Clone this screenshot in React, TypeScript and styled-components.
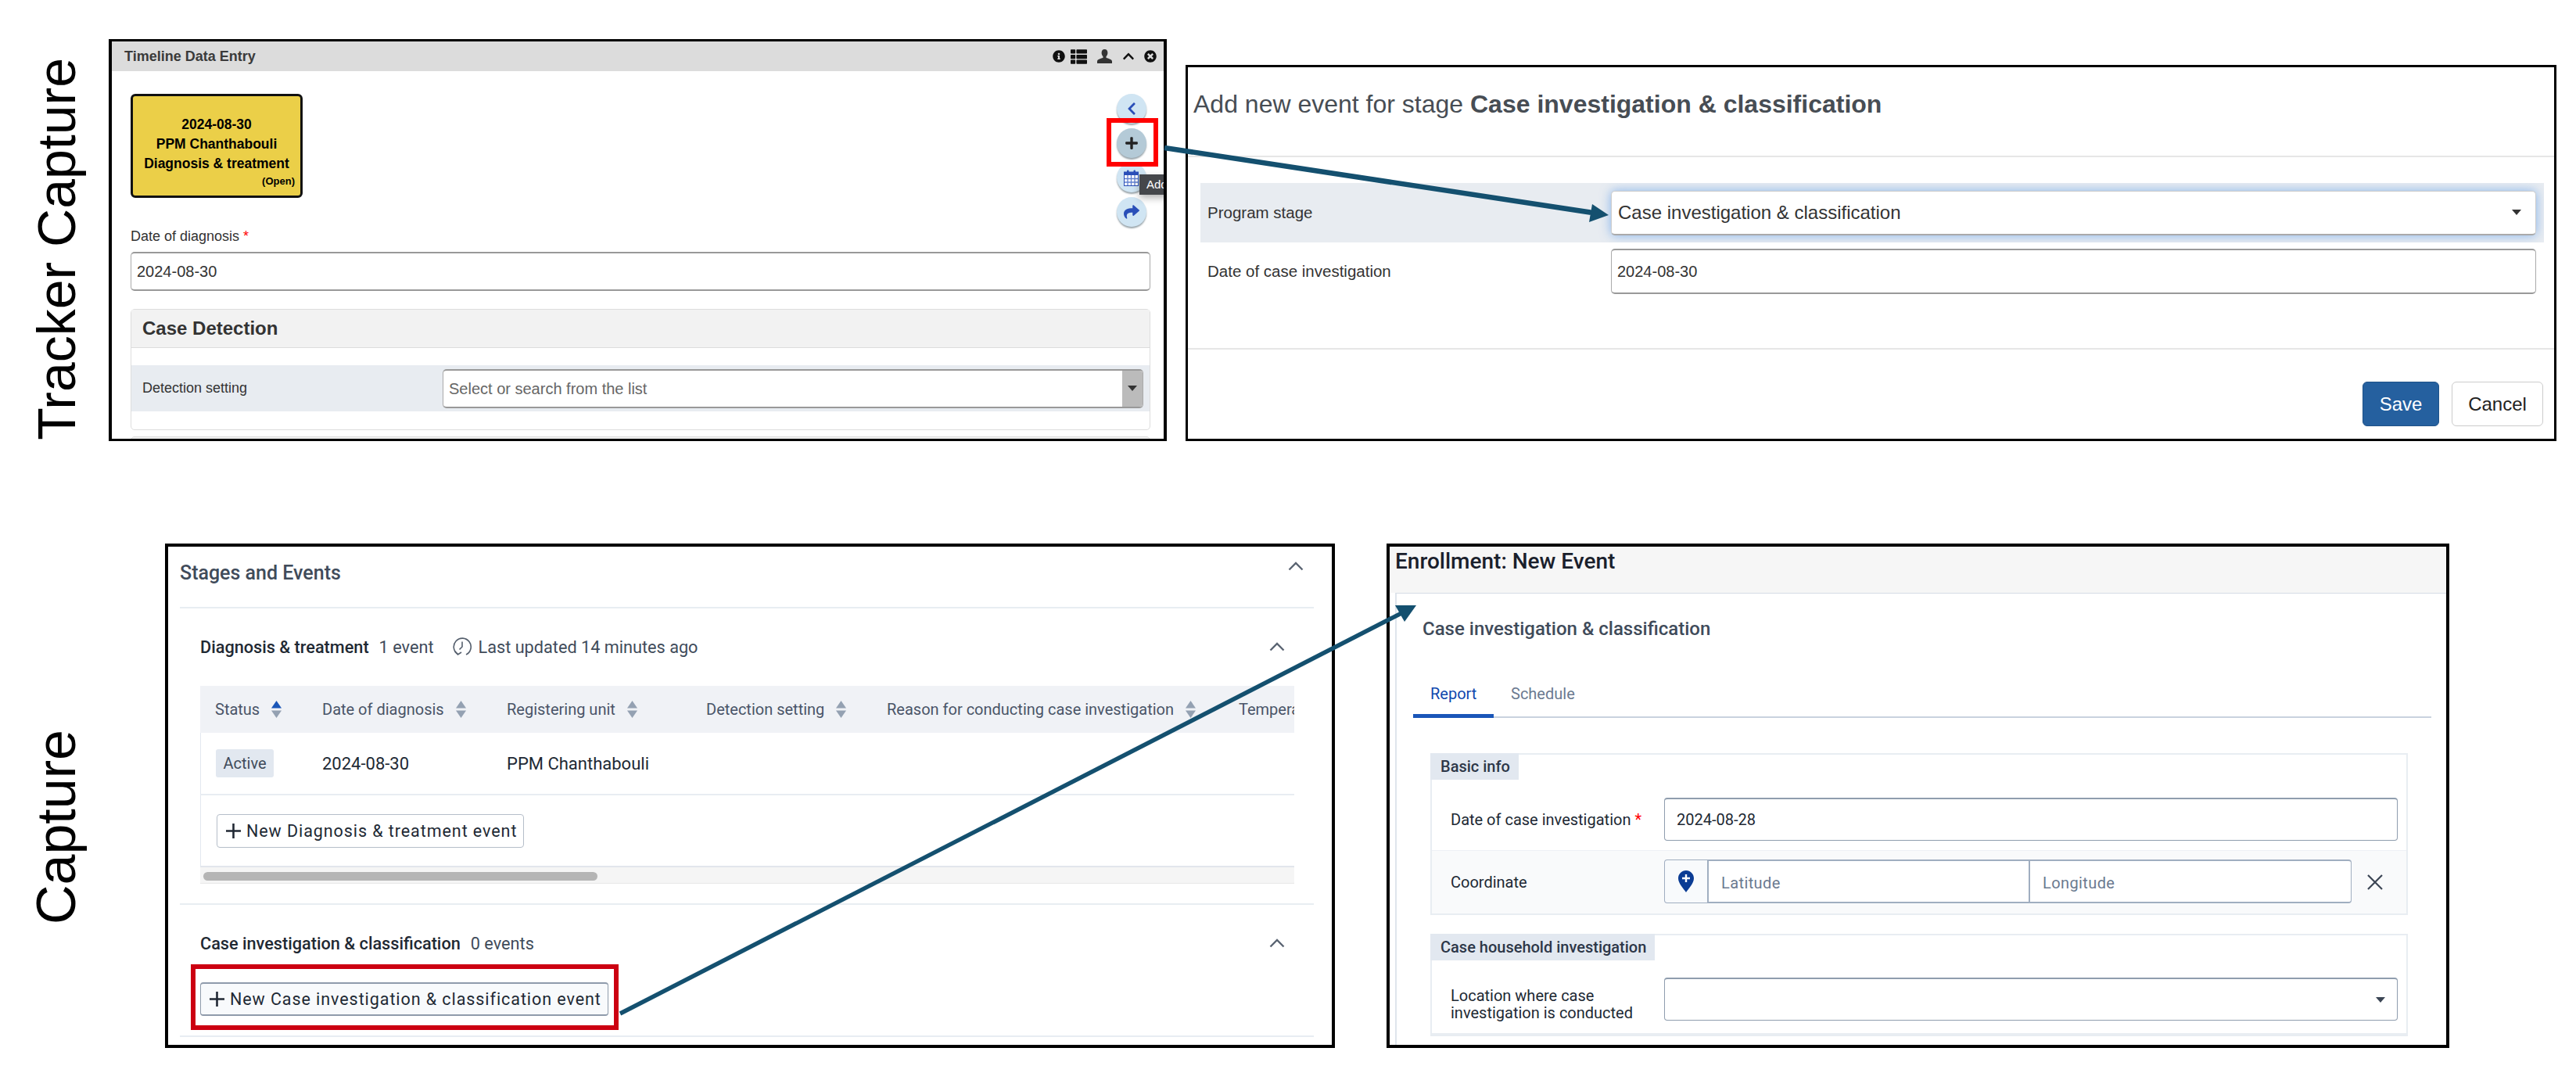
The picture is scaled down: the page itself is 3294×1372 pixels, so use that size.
import React from 'react';
import styled, { createGlobalStyle } from 'styled-components';
import { FaChevronLeft, FaChevronUp, FaInfoCircle, FaPlus, FaShare, FaThList, FaTimesCircle } from 'react-icons/fa';

const GlobalStyle = createGlobalStyle`
  * { box-sizing: border-box; }
  html, body { margin: 0; background: #fff; }
  body { font-family: "Liberation Sans", Arial, sans-serif; color: #333; }
`;

const Page = styled.main`
  position: relative;
  width: 3294px;
  height: 1372px;
  padding-top: 50px;
  overflow: hidden;
  background: #fff;
`;

const Row = styled.div<{ $top?: number }>`
  display: flex;
  align-items: flex-start;
  margin-top: ${(p) => p.$top || 0}px;
`;

const SideSlot = styled.div<{ $width: number; $top: number }>`
  flex: none;
  width: ${(p) => p.$width}px;
  padding: ${(p) => p.$top}px 0 0 34px;
`;

const SideLabel = styled.div<{ $size: number }>`
  writing-mode: vertical-rl;
  transform: rotate(180deg);
  font-size: ${(p) => p.$size}px;
  line-height: 76px;
  color: #000;
  white-space: nowrap;
`;

const Frame = styled.section<{ $width: number; $height: number; $border: string; $left?: number; $top?: number }>`
  flex: none;
  width: ${(p) => p.$width}px;
  height: ${(p) => p.$height}px;
  margin-left: ${(p) => p.$left || 0}px;
  margin-top: ${(p) => p.$top || 0}px;
  border: solid #000;
  border-width: ${(p) => p.$border};
  overflow: hidden;
  background: #fff;
`;

/* Tracker Capture: widget */
const WidgetBar = styled.header`
  display: flex;
  align-items: center;
  height: 38px;
  padding: 0 9px 0 16px;
  background: #dcdcdc;
`;

const WidgetTitle = styled.h2`
  flex: 1;
  margin: 0;
  font-size: 18px;
  font-weight: 700;
  color: #3a3a3a;
`;

const WidgetIcons = styled.div`
  display: flex;
  align-items: center;
  gap: 7px;
  color: #111;
  svg { display: block; }
`;

const WidgetBody = styled.div`
  padding: 29px 17px 0 24px;
`;

const TopRow = styled.div`
  display: flex;
  justify-content: space-between;
  height: 170px;
`;

const EventCard = styled.div`
  display: flex;
  flex-direction: column;
  justify-content: flex-end;
  width: 220px;
  height: 133px;
  padding: 0 7px 9px;
  background: #ebcf48;
  border: 3px solid #111;
  border-radius: 6px;
  color: #000;
  font-weight: 700;
  font-size: 17.5px;
  line-height: 25px;
  text-align: center;
  white-space: nowrap;
`;

const CardNote = styled.div`
  font-size: 13px;
  line-height: 19px;
  text-align: right;
`;

const RoundColumn = styled.div`
  display: flex;
  flex-direction: column;
  gap: 6px;
  margin-right: 5px;
`;

const RoundWrap = styled.div`
  position: relative;
  width: 38px;
  height: 38px;
`;

const RoundButton = styled.div<{ $active?: boolean }>`
  display: flex;
  align-items: center;
  justify-content: center;
  width: 38px;
  height: 38px;
  border-radius: 50%;
  background: ${(p) => (p.$active ? '#b4cad7' : '#d0e5f3')};
  box-shadow: 0 2px 2px #9aa5ab;
  color: ${(p) => (p.$active ? '#222' : '#2a4fb8')};
`;

const Highlight = styled.div<{ $inset: string; $color: string; $width: string }>`
  position: absolute;
  inset: ${(p) => p.$inset};
  border: solid ${(p) => p.$color};
  border-width: ${(p) => p.$width};
  z-index: 3;
`;

const Tooltip = styled.div`
  position: absolute;
  top: 15px;
  left: 29px;
  z-index: 2;
  width: 60px;
  height: 26px;
  padding-left: 9px;
  background: #45474b;
  box-shadow: 0 4px 10px rgba(0, 0, 0, 0.3);
  color: #fff;
  font-size: 15px;
  line-height: 26px;
`;

const FieldLabel = styled.label`
  display: block;
  margin-top: 2px;
  font-size: 18px;
  line-height: 20px;
  color: #333;
`;

const Required = styled.span`
  color: #f00;
`;

const LegacyInput = styled.div<{ $height: number; $muted?: boolean }>`
  flex: 1;
  height: ${(p) => p.$height}px;
  padding-left: 7px;
  background: #fff;
  border: 1px solid #aaa;
  border-top: 2px solid #999;
  border-bottom: 2px solid #999;
  border-radius: 5px;
  font-size: 20px;
  line-height: ${(p) => p.$height - 4}px;
  color: ${(p) => (p.$muted ? '#666' : '#333')};
`;

const DateBlock = styled.div`
  display: flex;
  margin-top: 10px;
`;

const LegacyPanel = styled.div`
  height: 155px;
  margin-top: 23px;
  border: 1px solid #ddd;
  border-radius: 5px;
`;

const LegacyPanelHead = styled.div`
  height: 49px;
  padding-left: 14px;
  background: #f2f2f2;
  border-bottom: 1px solid #ddd;
  font-size: 24px;
  font-weight: 700;
  line-height: 48px;
`;

const DetectionRow = styled.div`
  display: flex;
  align-items: center;
  height: 59px;
  margin-top: 22px;
  padding: 0 8px 0 14px;
  background: #e8ecf1;
`;

const DetectionLabel = styled.span`
  width: 384px;
  font-size: 18px;
`;

const SelectInput = styled(LegacyInput)`
  position: relative;
  overflow: hidden;
`;

const SelectAddon = styled.span`
  position: absolute;
  top: 0;
  right: 0;
  bottom: 0;
  display: flex;
  align-items: center;
  justify-content: center;
  width: 26px;
  background: #bbb;
`;

const Caret = styled.i<{ $color?: string }>`
  display: block;
  width: 0;
  height: 0;
  border: 6px solid transparent;
  border-bottom: 0;
  border-top: 7px solid ${(p) => p.$color || '#333'};
`;

const NextPanel = styled.div`
  height: 20px;
  margin-top: 8px;
  background: #f0f0f0;
  border: 1px solid #ddd;
  border-radius: 5px;
`;

/* Tracker Capture: modal */
const ModalHead = styled.h2`
  height: 115px;
  margin: 0;
  padding: 27px 0 0 7px;
  border-bottom: 2px solid #e6e6e6;
  font-size: 32px;
  font-weight: 400;
  line-height: 40px;
  color: #474d54;
  b { font-weight: 700; }
`;

const ModalBody = styled.div`
  height: 246px;
  padding-top: 33px;
  border-bottom: 2px solid #e6e6e6;
`;

const ModalRow = styled.div<{ $focus?: boolean }>`
  display: flex;
  align-items: center;
  height: ${(p) => (p.$focus ? 76 : 58)}px;
  margin: ${(p) => (p.$focus ? '0' : '8px')} 13px 0 16px;
  padding: 0 10px 0 9px;
  background: ${(p) => (p.$focus ? '#e8ecf1' : 'transparent')};
  overflow: hidden;
`;

const ModalLabel = styled.span`
  flex: none;
  width: 516px;
  font-size: 20.5px;
  color: #333;
`;

const FocusSelect = styled.div`
  position: relative;
  display: flex;
  align-items: center;
  flex: 1;
  height: 57px;
  padding: 0 18px 0 8px;
  background: #fff;
  border: 1px solid #ccc;
  border-bottom: 2px solid #aaa;
  border-radius: 5px;
  box-shadow: 0 0 14px rgba(102, 160, 233, 0.75);
  font-size: 24px;
  color: #333;
  span { flex: 1; }
`;

const ModalFoot = styled.div`
  display: flex;
  justify-content: flex-end;
  gap: 16px;
  padding: 41px 14px 0 0;
`;

const ModalButton = styled.div<{ $primary?: boolean }>`
  width: ${(p) => (p.$primary ? 98 : 117)}px;
  height: 57px;
  background: ${(p) => (p.$primary ? '#25609f' : '#fff')};
  border: 1px solid ${(p) => (p.$primary ? '#1f5288' : '#ccc')};
  border-radius: 6px;
  color: ${(p) => (p.$primary ? '#fff' : '#222')};
  font-size: 24px;
  line-height: 55px;
  text-align: center;
`;

/* Capture: stages list */
const RobotoFrame = styled(Frame)`
  font-family: Roboto, "Liberation Sans", sans-serif;
`;

const StagesBody = styled.div`
  padding: 0 23px 0 15px;
`;

const StagesHead = styled.div`
  display: flex;
  align-items: flex-start;
  justify-content: space-between;
  height: 79px;
  padding: 19px 13px 0 0;
  border-bottom: 2px solid #e8edf2;
  font-size: 25px;
  font-weight: 500;
  line-height: 30px;
  color: #404b5a;
`;

const Stage = styled.div`
  padding: 0 25px 25px 26px;
  border-bottom: 2px solid #e8edf2;
`;

const StageHead = styled.div`
  display: flex;
  align-items: center;
  height: 99px;
  padding: 34px 12px 35px 0;
  font-size: 21.7px;
  color: #404b5a;
  b { font-weight: 500; color: #1f2933; margin-right: 13px; }
`;

const StageUpdated = styled.span`
  display: inline-flex;
  align-items: center;
  flex: 1;
  margin-left: 25px;
  gap: 8px;
`;

const Chevron = styled.svg`
  flex: none;
  display: block;
  margin-left: auto;
`;

const TableClip = styled.div`
  overflow: hidden;
`;

const TableLine = styled.div<{ $head?: boolean }>`
  display: flex;
  align-items: center;
  height: ${(p) => (p.$head ? 60 : 80)}px;
  background: ${(p) => (p.$head ? '#f0f2f6' : '#fff')};
  border-left: 1px solid ${(p) => (p.$head ? '#f0f2f6' : '#e2e8f0')};
  border-bottom: ${(p) => (p.$head ? 0 : '2px solid #e8edf2')};
`;

const Cell = styled.div<{ $width: number; $head?: boolean }>`
  flex: none;
  display: flex;
  align-items: center;
  gap: 15px;
  width: ${(p) => p.$width}px;
  font-size: ${(p) => (p.$head ? 20 : 22)}px;
  color: ${(p) => (p.$head ? '#4a5568' : '#212934')};
  white-space: nowrap;
`;

const FirstPad = styled.div<{ $width: number }>`
  flex: none;
  width: ${(p) => p.$width}px;
`;

const StatusChip = styled.span`
  display: inline-block;
  width: 74px;
  height: 36px;
  background: #e2e8f0;
  border-radius: 3px;
  color: #404b5a;
  font-size: 20px;
  line-height: 36px;
  text-align: center;
`;

const ButtonSlot = styled.div`
  height: 90px;
  padding: 24px 0 0 20px;
  border-left: 1px solid #e2e8f0;
`;

const AddButton = styled.div<{ $focus?: boolean }>`
  position: relative;
  display: inline-flex;
  align-items: center;
  gap: 7px;
  height: 43px;
  padding: 0 8px 0 11px;
  background: ${(p) => (p.$focus ? '#f8fafc' : '#fff')};
  border: 1px solid ${(p) => (p.$focus ? '#8f9bab' : '#b5bec9')};
  border-width: ${(p) => (p.$focus ? '2px 1px' : '1px')};
  border-radius: 4px;
  color: #212934;
  font-size: 21.5px;
  letter-spacing: 0.93px;
  white-space: nowrap;
`;

const ScrollTrack = styled.div`
  height: 23px;
  padding-top: 6px;
  background: #f5f5f5;
  border-top: 2px solid #e2e6ec;
  border-bottom: 1px solid #e8e8e8;
`;

const ScrollThumb = styled.div`
  width: 504px;
  height: 11px;
  margin-left: 4px;
  background: #b5b5b5;
  border-radius: 6px;
`;

/* Capture: new event form */
const EnrollHead = styled.h2`
  height: 59px;
  margin: 0;
  padding-left: 7px;
  background: #f6f6f6;
  font-size: 28px;
  font-weight: 500;
  line-height: 38px;
  color: #1a202c;
`;

const EnrollCard = styled.div`
  height: 600px;
  margin-left: 7px;
  border-top: 1px solid #d5dce5;
  border-left: 2px solid #dfe5ec;
`;

const EnrollTitle = styled.h3`
  margin: 0;
  padding: 30px 0 0 33px;
  font-size: 24px;
  font-weight: 500;
  line-height: 30px;
  color: #404b5a;
`;

const Tabs = styled.div`
  display: flex;
  align-items: flex-end;
  height: 99px;
  margin: 0 19px 0 21px;
  border-bottom: 2px solid #c9d2de;
`;

const Tab = styled.div<{ $active?: boolean }>`
  height: 60px;
  margin-bottom: -2px;
  padding: 0 22px;
  width: ${(p) => (p.$active ? '103px' : 'auto')};
  border-bottom: ${(p) => (p.$active ? '5px solid #1a56b8' : '0')};
  color: ${(p) => (p.$active ? '#1048ae' : '#6b7a90')};
  font-size: 20px;
  line-height: 58px;
  text-align: center;
`;

const FormSection = styled.div<{ $top: number; $thick?: boolean }>`
  width: 1250px;
  margin: ${(p) => p.$top}px 0 0 43px;
  border: 2px solid #e8edf2;
  border-bottom-width: ${(p) => (p.$thick ? 4 : 2)}px;
`;

const SectionChip = styled.div`
  display: inline-block;
  height: 34px;
  margin: -2px 0 0 -2px;
  padding: 0 11px 0 13px;
  background: #e2e8f0;
  color: #2d3748;
  font-size: 20px;
  font-weight: 500;
  line-height: 34px;
  vertical-align: top;
`;

const FormRow = styled.div<{ $alt?: boolean; $height: number; $top: number }>`
  display: flex;
  align-items: flex-start;
  height: ${(p) => p.$height}px;
  padding: ${(p) => p.$top}px 11px 0 24px;
  background: ${(p) => (p.$alt ? '#f9fafb' : '#fff')};
  border-top: ${(p) => (p.$alt ? '1px solid #eef1f5' : '0')};
`;

const FormLabel = styled.label<{ $offset: number }>`
  flex: none;
  width: 273px;
  padding-top: ${(p) => p.$offset}px;
  padding-right: 24px;
  font-size: 20px;
  line-height: 22px;
  color: #212934;
`;

const FormInput = styled.div`
  display: flex;
  align-items: center;
  justify-content: space-between;
  flex: 1;
  height: 55px;
  padding: 0 15px;
  background: #fff;
  border: 1px solid #8f9dae;
  border-top-width: 2px;
  border-radius: 4px;
  font-size: 20px;
  color: #212934;
`;

const PinBox = styled.div`
  flex: none;
  display: flex;
  align-items: center;
  justify-content: center;
  width: 57px;
  height: 56px;
  background: #f8fafc;
  border: 1px solid #a0aec0;
  border-right-width: 2px;
  border-radius: 4px 0 0 4px;
`;

const CoordInput = styled.div<{ $end?: boolean }>`
  flex: none;
  width: 411px;
  height: 56px;
  padding: 4px 0 0 16px;
  background: #fff;
  border: 2px solid #a0aec0;
  border-left: 0;
  border-right: ${(p) => (p.$end ? '1px solid #a0aec0' : '2px solid #a0aec0')};
  border-radius: ${(p) => (p.$end ? '0 4px 4px 0' : '0')};
  color: #6b7a90;
  font-size: 20px;
  letter-spacing: 0.4px;
  line-height: 48px;
`;

const ClearMark = styled.svg`
  flex: none;
  margin: 19px 0 0 20px;
`;

const ArrowLayer = styled.svg`
  position: absolute;
  top: 0;
  left: 0;
  z-index: 5;
  pointer-events: none;
`;

function UpChevron() {
  return (
    <Chevron width="20" height="12" viewBox="0 0 20 12">
      <polyline points="1.5,10.5 10,2 18.5,10.5" fill="none" stroke="#5a6472" strokeWidth="2.4" />
    </Chevron>
  );
}

function SortMark({ active }: { active?: boolean }) {
  return (
    <svg width="13" height="22" viewBox="0 0 13 22">
      <polygon points="6.5,0 13,9.5 0,9.5" fill={active ? '#1a56b8' : '#94a1b2'} />
      <polygon points="0,12.5 13,12.5 6.5,22" fill="#94a1b2" />
    </svg>
  );
}

function PlusMark() {
  return (
    <svg width="19" height="19" viewBox="0 0 19 19">
      <path d="M9.500 0v19M0 9.500h19" stroke="#212934" strokeWidth="2.6" />
    </svg>
  );
}

// clock with a back-arrow at the lower left
function HistoryMark() {
  return (
    <svg width="24" height="26" viewBox="0 0 24 26" fill="none" stroke="#555f6d" strokeWidth="1.6">
      <path d="M6.500 22.500A11 11 0 1 1 17 23" />
      <path d="M2.500 18.500l4 4.500 4.500-3" />
      <path d="M12 6.500V13l-3.500 3.500" />
    </svg>
  );
}

function UserBust() {
  return (
    <svg width="19" height="18" viewBox="0 0 19 18" style={{ marginLeft: 6 }}>
      <path
        fill="#333"
        d="M9.500 0C6.800 0 5.600 2 5.600 4.600c0 2 .8 3.700 1.900 4.600v1.600C5 12 .4 12.700 0 15.200V18h19v-2.800c-.4-2.500-5-3.200-7.500-4.400V9.200c1.100-.9 1.900-2.600 1.900-4.600C13.400 2 12.200 0 9.500 0z"
      />
    </svg>
  );
}

function CalendarMark() {
  return (
    <svg width="19" height="21" viewBox="0 0 19 21" style={{ marginLeft: -1 }}>
      <rect x="0.5" y="3" width="18" height="17.500" fill="#fff" stroke="#2a4fb8" />
      <rect x="0.5" y="3" width="18" height="4" fill="#2a4fb8" />
      <rect x="4" y="0.5" width="2.500" height="5" rx="1" fill="#2a4fb8" />
      <rect x="12.500" y="0.5" width="2.500" height="5" rx="1" fill="#2a4fb8" />
      <path d="M5 7v13M9.500 7v13M14 7v13M1 11.500h17M1 16h17" stroke="#5f7fd0" strokeWidth="1.3" />
    </svg>
  );
}

function PinMark() {
  return (
    <svg width="20" height="28" viewBox="0 0 20 28">
      <path fill="#0b3c94" d="M10 0C4.500 0 0 4.500 0 10c0 6.500 6.500 13 10 18 3.500-5 10-11.500 10-18C20 4.500 15.500 0 10 0z" />
      <path d="M10 5v10M5 10h10" stroke="#fff" strokeWidth="2.400" />
    </svg>
  );
}

const headCells = [
  { label: 'Date of diagnosis', width: 236 },
  { label: 'Registering unit', width: 255 },
  { label: 'Detection setting', width: 231 },
  { label: 'Reason for conducting case investigation', width: 450 },
];

function App(): JSX.Element {
  return (
    <Page>
      <GlobalStyle />
      <Row>
        <SideSlot $width={139} $top={24}>
          <SideLabel $size={68}>Tracker Capture</SideLabel>
        </SideSlot>
        <Frame $width={1353} $height={514} $border="3px 4px">
          <WidgetBar>
            <WidgetTitle>Timeline Data Entry</WidgetTitle>
            <WidgetIcons>
              <FaInfoCircle size={16} />
              <FaThList size={21} />
              <UserBust />
              <FaChevronUp size={16} style={{ marginLeft: 6 }} />
              <FaTimesCircle size={16} style={{ marginLeft: 5 }} />
            </WidgetIcons>
          </WidgetBar>
          <WidgetBody>
            <TopRow>
              <EventCard>
                <div>2024-08-30</div>
                <div>PPM Chanthabouli</div>
                <div>Diagnosis &amp; treatment</div>
                <CardNote>(Open)</CardNote>
              </EventCard>
              <RoundColumn>
                <RoundWrap>
                  <RoundButton>
                    <FaChevronLeft size={18} />
                  </RoundButton>
                </RoundWrap>
                <RoundWrap>
                  <RoundButton $active>
                    <FaPlus size={18} />
                  </RoundButton>
                  <Highlight $inset="-13px -15px -11px -13px" $color="#f00" $width="6px" />
                </RoundWrap>
                <RoundWrap>
                  <RoundButton>
                    <CalendarMark />
                  </RoundButton>
                  <Tooltip>Add</Tooltip>
                </RoundWrap>
                <RoundWrap>
                  <RoundButton>
                    <FaShare size={20} />
                  </RoundButton>
                </RoundWrap>
              </RoundColumn>
            </TopRow>
            <FieldLabel>
              Date of diagnosis <Required>*</Required>
            </FieldLabel>
            <DateBlock>
              <LegacyInput $height={50}>2024-08-30</LegacyInput>
            </DateBlock>
            <LegacyPanel>
              <LegacyPanelHead>Case Detection</LegacyPanelHead>
              <DetectionRow>
                <DetectionLabel>Detection setting</DetectionLabel>
                <SelectInput $height={50} $muted>
                  Select or search from the list
                  <SelectAddon>
                    <Caret />
                  </SelectAddon>
                </SelectInput>
              </DetectionRow>
            </LegacyPanel>
            <NextPanel />
          </WidgetBody>
        </Frame>
        <Frame $width={1753} $height={481} $border="3px" $left={24} $top={33}>
          <ModalHead>
            Add new event for stage <b>Case investigation &amp; classification</b>
          </ModalHead>
          <ModalBody>
            <ModalRow $focus>
              <ModalLabel>Program stage</ModalLabel>
              <FocusSelect>
                <span>Case investigation &amp; classification</span>
                <Caret />
              </FocusSelect>
            </ModalRow>
            <ModalRow>
              <ModalLabel>Date of case investigation</ModalLabel>
              <LegacyInput $height={58}>2024-08-30</LegacyInput>
            </ModalRow>
          </ModalBody>
          <ModalFoot>
            <ModalButton $primary>Save</ModalButton>
            <ModalButton>Cancel</ModalButton>
          </ModalFoot>
        </Frame>
      </Row>
      <Row $top={131}>
        <SideSlot $width={211} $top={238}>
          <SideLabel $size={70}>Capture</SideLabel>
        </SideSlot>
        <RobotoFrame $width={1496} $height={645} $border="4px">
          <StagesBody>
            <StagesHead>
              Stages and Events
              <UpChevron />
            </StagesHead>
            <Stage>
              <StageHead>
                <b>Diagnosis &amp; treatment</b>1 event
                <StageUpdated>
                  <HistoryMark />
                  Last updated 14 minutes ago
                </StageUpdated>
                <UpChevron />
              </StageHead>
              <TableClip>
                <TableLine $head>
                  <FirstPad $width={18} />
                  <Cell $head $width={137}>
                    Status <SortMark active />
                  </Cell>
                  {headCells.map((cell) => (
                    <Cell $head $width={cell.width} key={cell.label}>
                      {cell.label} <SortMark />
                    </Cell>
                  ))}
                  <Cell $head $width={200}>
                    Temperature
                  </Cell>
                </TableLine>
                <TableLine>
                  <FirstPad $width={19} />
                  <Cell $width={136}>
                    <StatusChip>Active</StatusChip>
                  </Cell>
                  <Cell $width={236}>2024-08-30</Cell>
                  <Cell $width={255}>PPM Chanthabouli</Cell>
                </TableLine>
                <ButtonSlot>
                  <AddButton>
                    <PlusMark />
                    New Diagnosis &amp; treatment event
                  </AddButton>
                </ButtonSlot>
                <ScrollTrack>
                  <ScrollThumb />
                </ScrollTrack>
              </TableClip>
            </Stage>
            <Stage>
              <StageHead>
                <b>Case investigation &amp; classification</b>0 events
                <UpChevron />
              </StageHead>
              <AddButton $focus>
                <PlusMark />
                New Case investigation &amp; classification event
                <Highlight $inset="-25px -14px -20px -13px" $color="#cc0011" $width="6px" />
              </AddButton>
            </Stage>
          </StagesBody>
        </RobotoFrame>
        <RobotoFrame $width={1359} $height={645} $border="4px" $left={66}>
          <EnrollHead>Enrollment: New Event</EnrollHead>
          <EnrollCard>
            <EnrollTitle>Case investigation &amp; classification</EnrollTitle>
            <Tabs>
              <Tab $active>Report</Tab>
              <Tab>Schedule</Tab>
            </Tabs>
            <FormSection $top={45}>
              <SectionChip>Basic info</SectionChip>
              <FormRow $height={90} $top={23}>
                <FormLabel $offset={17}>
                  Date of case investigation <Required>*</Required>
                </FormLabel>
                <FormInput>2024-08-28</FormInput>
              </FormRow>
              <FormRow $alt $height={81} $top={11}>
                <FormLabel $offset={18}>Coordinate</FormLabel>
                <PinBox>
                  <PinMark />
                </PinBox>
                <CoordInput>Latitude</CoordInput>
                <CoordInput $end>Longitude</CoordInput>
                <ClearMark width="20" height="20" viewBox="0 0 20 20">
                  <path d="M1 1l18 18M19 1L1 19" stroke="#3b4554" strokeWidth="2.2" />
                </ClearMark>
              </FormRow>
            </FormSection>
            <FormSection $top={24} $thick>
              <SectionChip>Case household investigation</SectionChip>
              <FormRow $height={93} $top={22}>
                <FormLabel $offset={12}>Location where case investigation is conducted</FormLabel>
                <FormInput>
                  <span />
                  <Caret $color="#3b4554" />
                </FormInput>
              </FormRow>
            </FormSection>
          </EnrollCard>
        </RobotoFrame>
      </Row>
      <ArrowLayer width="3294" height="1372" viewBox="0 0 3294 1372">
        <line x1="1489" y1="189" x2="2040" y2="272.500" stroke="#14506f" strokeWidth="6.500" />
        <polygon points="2057,275 2036,261 2032,284" fill="#14506f" />
        <line x1="793" y1="1296" x2="1796" y2="782" stroke="#14506f" strokeWidth="5.500" />
        <polygon points="1811,774 1784,774 1796,795" fill="#14506f" />
      </ArrowLayer>
    </Page>
  );
}

export default App;
